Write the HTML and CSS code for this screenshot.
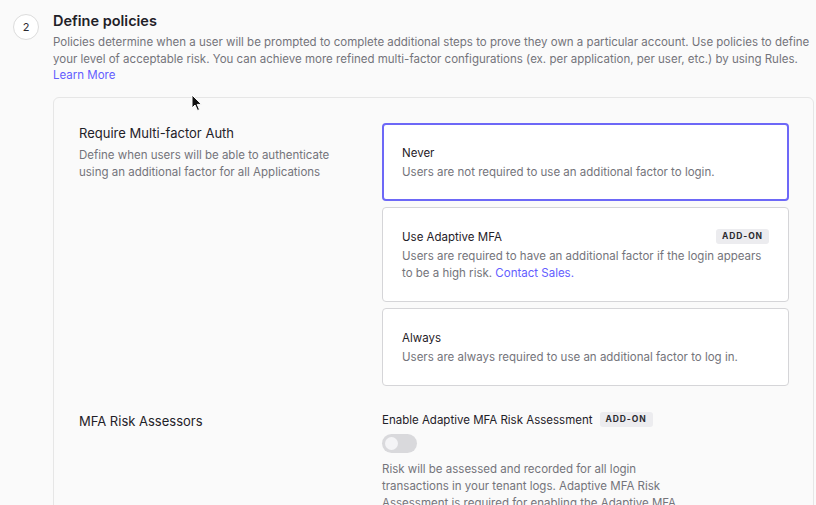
FILE: index.html
```html
<!DOCTYPE html>
<html>
<head>
<meta charset="utf-8">
<link rel="stylesheet" href="styles.css">
</head>
<body>
<div class="step">
  <div class="step-num">2</div>
  <div class="step-body">
    <h2 class="step-title">Define policies</h2>
    <p class="step-desc">Policies determine when a user will be prompted to complete additional steps to prove they own a particular account. Use policies to define your level of acceptable risk. You can achieve more refined multi-factor configurations (ex. per application, per user, etc.) by using Rules. <a class="link" href="#">Learn More</a></p>
    <div class="panel">
      <div class="row">
        <div class="row-label">
          <div class="label-title">Require Multi-factor Auth</div>
          <div class="label-desc">Define when users will be able to authenticate using an additional factor for all Applications</div>
        </div>
        <div class="options">
          <div class="option selected">
            <div class="opt-head"><span class="opt-title">Never</span></div>
            <div class="opt-desc">Users are not required to use an additional factor to login.</div>
          </div>
          <div class="option">
            <div class="opt-head"><span class="opt-title">Use Adaptive MFA</span><span class="badge">ADD-ON</span></div>
            <div class="opt-desc">Users are required to have an additional factor if the login appears to be a high risk. <a class="link" href="#">Contact Sales.</a></div>
          </div>
          <div class="option">
            <div class="opt-head"><span class="opt-title">Always</span></div>
            <div class="opt-desc">Users are always required to use an additional factor to log in.</div>
          </div>
        </div>
      </div>
      <div class="row">
        <div class="row-label">
          <div class="label-title">MFA Risk Assessors</div>
        </div>
        <div class="assess">
          <div class="assess-head"><span class="opt-title">Enable Adaptive MFA Risk Assessment</span><span class="badge">ADD-ON</span></div>
          <div class="toggle"><span class="knob"></span></div>
          <div class="assess-desc">Risk will be assessed and recorded for all login transactions in your tenant logs. Adaptive MFA Risk Assessment is required for enabling the Adaptive MFA policy.</div>
        </div>
      </div>
    </div>
  </div>
</div>
<svg class="cursor" width="12" height="18" viewBox="0 0 12 18"><path d="M1 1 L1 14 L4 11 L6.5 16.5 L8.5 15.6 L6.2 10.4 L10.5 10.4 Z" fill="#111" stroke="#fff" stroke-width="1"/></svg>
</body>
</html>
```

FILE: styles.css
```css
html, body {
  margin: 0;
  padding: 0;
  background: #fafafa;
  font-family: Inter, "Noto Sans", sans-serif;
  color: #1f2128;
  overflow: hidden;
  height: 505px;
}
.step {
  display: flex;
  padding: 14px 0 0 13px;
}
.step-num {
  flex: none;
  width: 24px;
  height: 24px;
  border: 1px solid #dcdcdc;
  border-radius: 50%;
  background: #fff;
  display: flex;
  align-items: center;
  justify-content: center;
  font-size: 11px;
  color: #2a2a2f;
}
.step-body {
  margin-left: 14px;
  flex: 1;
  margin-top: -3px;
}
.step-title {
  margin: 0;
  font-size: 14.5px;
  font-weight: 600;
  line-height: 20px;
}
.step-desc {
  margin: 3px 0 0;
  font-size: 11.5px;
  line-height: 16.5px;
  color: #74747b;
}
.link {
  color: #635dff;
  text-decoration: none;
}
.panel {
  margin-top: 13px;
  margin-right: 2px;
  border: 1px solid #e6e6e6;
  border-radius: 6px;
  padding: 25px 24px 0 25px;
}
.row {
  display: grid;
  grid-template-columns: 303px 1fr;
  margin-bottom: 25px;
}
.row-label {
  padding-top: 1px;
}
.label-title {
  font-size: 13px;
  line-height: 18px;
}
.label-desc {
  margin-top: 5px;
  font-size: 11.5px;
  line-height: 17px;
  color: #74747b;
  max-width: 270px;
}
.options {
  display: flex;
  flex-direction: column;
  gap: 6px;
}
.option {
  background: #fff;
  border: 1px solid #d5d5d8;
  border-radius: 4px;
  padding: 20px 19px 19px;
}
.option.selected {
  border: 2px solid #6d68f7;
  padding: 19px 18px 18px;
}
.opt-head {
  display: flex;
  justify-content: space-between;
  align-items: center;
  height: 18px;
}
.opt-title {
  font-size: 11.5px;
  line-height: 18px;
  color: #1f2128;
}
.opt-desc {
  margin-top: 2px;
  font-size: 11.5px;
  line-height: 17px;
  color: #74747b;
}
.badge {
  background: #ececef;
  border-radius: 3px;
  font-size: 8.5px;
  font-weight: 700;
  letter-spacing: 0.9px;
  padding: 2px 6px;
  line-height: 11px;
  color: #2a2a2f;
}
.assess-head {
  display: flex;
  align-items: center;
  gap: 7px;
}
.toggle {
  margin-top: 5px;
  width: 35px;
  height: 19px;
  border-radius: 10px;
  background: #d9d9dc;
  position: relative;
}
.knob {
  position: absolute;
  left: 3px;
  top: 3px;
  width: 13px;
  height: 13px;
  border-radius: 50%;
  background: #f4f4f6;
}
.assess-desc {
  margin-top: 8px;
  font-size: 11.5px;
  line-height: 17px;
  color: #74747b;
  max-width: 300px;
}
.cursor {
  position: absolute;
  left: 191px;
  top: 94px;
}
```
